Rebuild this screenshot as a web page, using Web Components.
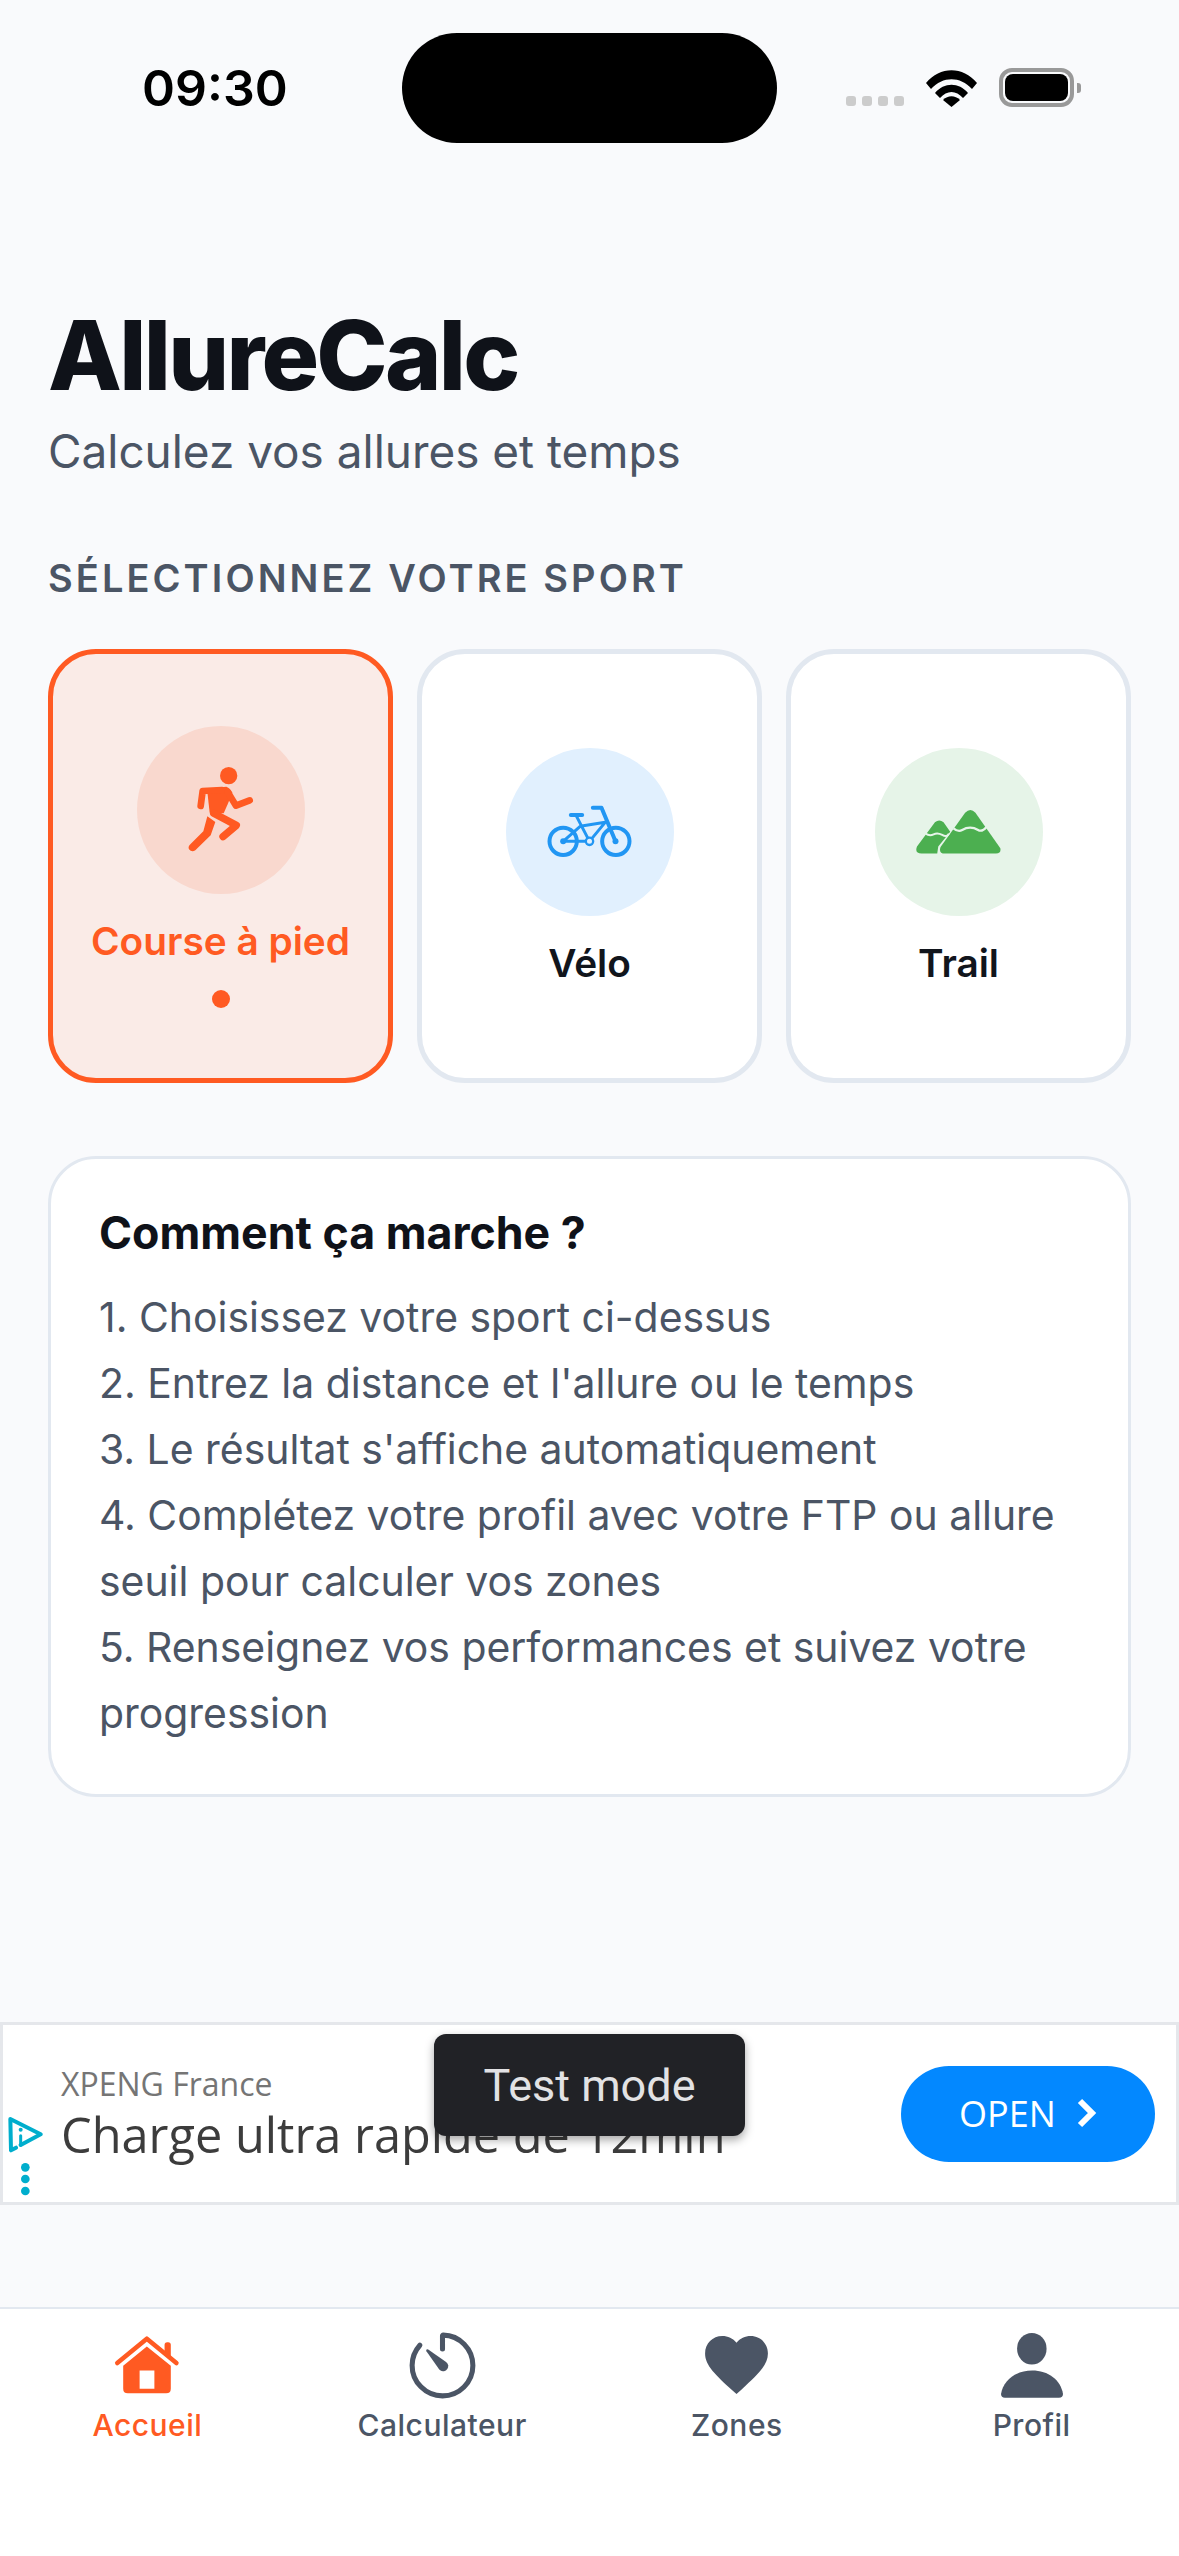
<!DOCTYPE html>
<html lang="fr">
<head>
<meta charset="utf-8">
<title>AllureCalc</title>
<style>
  html, body { margin: 0; padding: 0; }
  body { width: 1179px; height: 2556px; overflow: hidden; background: #f9fafc; font-family: Inter, "Liberation Sans", sans-serif; }
  svg { display: block; }
</style>
</head>
<body>
<app-root>
  <status-bar slot="status" time="09:30"></status-bar>
  <app-header slot="header" heading="AllureCalc" sub="Calculez vos allures et temps" label="Sélectionnez votre sport"></app-header>
  <sport-grid slot="sports">
    <sport-card label="Course à pied" active style="--accent:#ff5a22;--soft:#f9d8ce;--label:#ff5a22">
      <svg width="68" height="88" viewBox="470 410 204 264">
        <circle cx="595" cy="439" r="26" fill="#ff5a22"/>
        <path d="M530 478 L588 472 Q600 476 606 490 L592 525 L580 552 L538 550 Z" fill="#ff5a22"/>
        <g fill="none" stroke="#ff5a22" stroke-linecap="round" stroke-linejoin="round">
          <path d="M511 530 L517 485 L575 482" stroke-width="20"/>
          <path d="M592 488 L617 529 L658 513" stroke-width="20"/>
          <path d="M550 552 L618 588 L578 622" stroke-width="22"/>
        </g>
        <path d="M531 561 L555 578 L541 618 L495 663 Q484 670 476 660 Q472 652 480 645 L519 606 Z" fill="#ff5a22"/>
      </svg>
    </sport-card>
    <sport-card label="Vélo" style="--accent:#e2e8f0;--soft:#e1f0fe;--label:#11151c;--bg:#fff">
      <svg width="87" height="55" viewBox="20 25 260 165">
        <g fill="none" stroke="#2196f3" stroke-linecap="round" stroke-linejoin="round">
          <circle cx="71" cy="137" r="41" stroke-width="12"/>
          <circle cx="229" cy="137" r="41" stroke-width="12"/>
          <path d="M160 36 H186 L228 137" stroke-width="12"/>
          <path d="M94 58 H128" stroke-width="12"/>
          <path d="M110 60 L150 137 L197 80 L122 92 L71 137 H150" stroke-width="9"/>
          <circle cx="150" cy="137" r="11" stroke-width="7" fill="#e1f0fe"/>
        </g>
        <circle cx="71" cy="137" r="9" fill="#2196f3"/>
        <circle cx="228" cy="137" r="9" fill="#2196f3"/>
      </svg>
    </sport-card>
    <sport-card label="Trail" style="--accent:#e2e8f0;--soft:#e6f4e8;--label:#11151c;--bg:#fff">
      <svg width="87" height="46" viewBox="30 42 262 138">
        <path d="M181 53 Q197 37 212 53 L287 160 Q290 176 274 176 H120 Q100 176 107 156 Z" fill="#4caf50"/>
        <path d="M90 82 Q103 70 116 82 L136 110 L100 155 L97 176 H50 Q28 176 36 155 Z" fill="#4caf50"/>
        <path d="M146 100 Q160 112 172 105 T196 98 T220 105 T246 95" fill="none" stroke="#e6f4e8" stroke-width="7"/>
        <path d="M62 116 Q74 124 86 118 T112 120 T132 116" fill="none" stroke="#e6f4e8" stroke-width="6"/>
      </svg>
    </sport-card>
  </sport-grid>
  <info-card slot="info" heading="Comment ça marche ?">
    <p>1. Choisissez votre sport ci-dessus</p>
    <p>2. Entrez la distance et l'allure ou le temps</p>
    <p>3. Le résultat s'affiche automatiquement</p>
    <p>4. Complétez votre profil avec votre FTP ou allure seuil pour calculer vos zones</p>
    <p>5. Renseignez vos performances et suivez votre progression</p>
  </info-card>
  <ad-banner slot="ad" brand="XPENG France" headline="Charge ultra rapide de 12min" cta="OPEN" toast="Test mode"></ad-banner>
  <tab-bar slot="tabs">
    <tab-item label="Accueil" active>
      <svg width="66" height="60" viewBox="162 136 201 180">
        <path d="M172 220 L262 146 L352 220" fill="none" stroke="#ff5a22" stroke-width="14" stroke-linecap="round" stroke-linejoin="round"/>
        <path d="M316 165 Q316 157 324 157 H327 Q335 157 335 165 V200 L316 185 Z" fill="#ff5a22"/>
        <path fill-rule="evenodd" d="M190 228 L262 170 L335 228 V298 Q335 312 321 312 H204 Q190 312 190 298 Z M240 243 V298 H285 V243 Z" fill="#ff5a22"/>
      </svg>
    </tab-item>
    <tab-item label="Calculateur">
      <svg width="81" height="81" viewBox="0 0 512 512">
        <path d="M112.91 128A191.85 191.85 0 0064 254c-1.18 106.35 85.65 193.8 192 194 106.2.2 192-85.83 192-192 0-104.54-83.55-189.61-187.5-192a4.36 4.36 0 00-4.5 4.37V152" fill="none" stroke="#4b5565" stroke-linecap="round" stroke-linejoin="round" stroke-width="32"/>
        <path d="M233.38 278.63l-79-113a8.13 8.13 0 0111.32-11.32l113 79a32.5 32.5 0 01-37.25 53.26 33.21 33.21 0 01-8.07-7.94z" fill="#4b5565"/>
      </svg>
    </tab-item>
    <tab-item label="Zones">
      <svg width="63" height="58" viewBox="48 64 416 384">
        <path d="M256 448l-30.164-27.211C118.718 322.442 48 258.61 48 179.095 48 114.221 97.918 64 162.4 64c36.399 0 70.717 16.742 93.6 43.947C278.882 80.742 313.199 64 349.6 64 414.082 64 464 114.221 464 179.095c0 79.516-70.719 143.348-177.836 241.694L256 448z" fill="#4b5565"/>
      </svg>
    </tab-item>
    <tab-item label="Profil">
      <svg width="62" height="65" viewBox="1085 128 185 194">
        <ellipse cx="1177" cy="175" rx="44" ry="47" fill="#4b5565"/>
        <path d="M1085 310 C1092 268 1130 240 1178 240 C1226 240 1263 268 1270 310 Q1270 321 1258 321 H1097 Q1085 321 1085 310 Z" fill="#4b5565"/>
      </svg>
    </tab-item>
  </tab-bar>
</app-root>
<script>
function def(name, css, html) {
  customElements.define(name, class extends HTMLElement {
    connectedCallback() {
      if (this.shadowRoot) return;
      const root = this.attachShadow({ mode: 'open' });
      const a = (k) => (this.getAttribute(k) || '');
      root.innerHTML = '<style>' + css + '</style>' + (typeof html === 'function' ? html(a, this) : html);
    }
  });
}

def('app-root', `
  :host { display: flex; flex-direction: column; width: 1179px; height: 2556px; }
  .main { display: flex; flex-direction: column; padding: 0 48px; }
  .ad { display: block; margin-top: 225px; }
  .tabs { display: block; margin-top: 102px; }
`, `
  <slot name="status"></slot>
  <div class="main">
    <slot name="header"></slot>
    <slot name="sports"></slot>
    <slot name="info"></slot>
  </div>
  <div class="ad"><slot name="ad"></slot></div>
  <div class="tabs"><slot name="tabs"></slot></div>
`);

def('status-bar', `
  :host { display: flex; align-items: flex-start; height: 153px; box-sizing: border-box; padding-top: 33px; }
  .time { width: 402px; padding-left: 142px; box-sizing: border-box; font: 600 50px/62px Inter, sans-serif; color: #000; margin-top: 24px; }
  .island { width: 375px; height: 110px; border-radius: 55px; background: #000; flex: none; }
  .right { display: flex; align-items: flex-end; margin-left: 69px; margin-top: 35px; }
  .dots { display: flex; gap: 6px; margin-bottom: 1px; }
  .dots i { width: 10px; height: 10px; border-radius: 3px; background: #ccc; }
  .wifi { margin-left: 22px; }
  .batt { margin-left: 22px; width: 75px; height: 39px; box-sizing: border-box; border: 4px solid #999; border-radius: 13px; padding: 2px; }
  .batt b { display: block; height: 100%; background: #000; border-radius: 8px; }
  .nub { width: 4px; height: 10px; background: #999; border-radius: 0 3px 3px 0; margin: 0 0 14px 3px; }
`, (a) => `
  <div class="time">${a('time')}</div>
  <div class="island"></div>
  <div class="right">
    <div class="dots"><i></i><i></i><i></i><i></i></div>
    <svg class="wifi" width="51" height="37" viewBox="0 0 51 37"><g fill="#000">
      <path d="M0 13 C14 -4 37 -4 51 13 L46 19 C34 6 17 6 5 19 Z"/>
      <path d="M9 23 C18 12 33 12 42 23 L37 28 C30 20 21 20 14 28 Z"/>
      <path d="M17 30 C22 25 29 25 34 30 L25.5 37 Z"/>
    </g></svg>
    <div class="batt"><b></b></div>
    <div class="nub"></div>
  </div>
`);

def('app-header', `
  :host { display: block; }
  h1 { margin: 144px 0 0; font: 800 96px/116px Inter, sans-serif; letter-spacing: -2.7px; color: #0f1219; }
  p { margin: 9px 0 0; font: 400 45.9px/60px Inter, sans-serif; color: #4b5565; }
  h2 { margin: 72px 0 47px; font: 600 38px/48px Inter, sans-serif; letter-spacing: 3.08px; color: #4b5565; text-transform: uppercase; }
`, (a) => `<h1>${a('heading')}</h1><p>${a('sub')}</p><h2>${a('label')}</h2>`);

def('sport-grid', `
  :host { display: grid; grid-template-columns: repeat(3, 345px); column-gap: 24px; }
`, `<slot></slot>`);

def('sport-card', `
  :host { display: flex; flex-direction: column; align-items: center; justify-content: center; box-sizing: border-box; height: 434px; padding-top: 2px; border: 5px solid var(--accent); border-radius: 48px; background: var(--bg, #faebe7); }
  .circle { width: 168px; height: 168px; border-radius: 50%; background: var(--soft); display: flex; align-items: center; justify-content: center; }
  .label { margin-top: 23px; font: 600 38.8px/48px Inter, sans-serif; color: var(--label); white-space: nowrap; }
  .dot { width: 18px; height: 18px; border-radius: 50%; background: var(--accent); margin-top: 25px; }
`, (a, el) => `
  <div class="circle"><slot></slot></div>
  <div class="label">${a('label')}</div>
  ${el.hasAttribute('active') ? '<div class="dot"></div>' : ''}
`);

def('info-card', `
  :host { display: block; box-sizing: border-box; margin-top: 73px; height: 641px; padding: 44px 48px 0; background: #fff; border: 3px solid #e2e8f0; border-radius: 48px; }
  h3 { margin: 0 0 21px; font: 700 44.7px/60px Inter, sans-serif; color: #0f1219; }
  .list { font: 400 40.9px/66px Inter, sans-serif; color: #4b5565; }
  ::slotted(p) { margin: 0; }
`, (a) => `<h3>${a('heading')}</h3><div class="list"><slot></slot></div>`);

def('ad-banner', `
  :host { display: flex; position: relative; box-sizing: border-box; height: 183px; background: #fff; border: 3px solid #e5e7eb; font-family: "Open Sans", sans-serif; }
  .choice { position: absolute; left: 0; top: 87px; }
  .text { margin-left: 58px; padding-top: 39px; white-space: nowrap; }
  .brand { font-size: 32px; line-height: 40px; color: #757575; }
  .head { font-size: 48.7px; line-height: 62px; color: #3c3c3c; margin-top: -1px; }
  .btn { position: absolute; right: 21px; top: 41px; display: flex; align-items: center; gap: 21px; box-sizing: border-box; height: 96px; width: 254px; padding-left: 58px; padding-bottom: 2px; border-radius: 48px; background: #0388ff; color: #fff; font-size: 36px; }
  .toast { position: absolute; left: 431px; top: 9px; width: 311px; height: 102px; box-sizing: border-box; display: flex; align-items: center; justify-content: center; background: #212226; border-radius: 12px; color: #e2e2e4; font: 400 45px/1 Roboto, sans-serif; box-shadow: 0 4px 10px rgba(0,0,0,.35); }
`, (a) => `
  <svg class="choice" width="40" height="92" viewBox="9 21 120 276">
    <g fill="none" stroke="#00aecd" stroke-linecap="round" stroke-linejoin="round">
      <path d="M48 128 L33 136 L31 42 L122 88 L62 120" stroke-width="12"/>
      <path d="M62 92 V120" stroke-width="9"/>
    </g>
    <circle cx="62" cy="74" r="6" fill="#00aecd"/>
    <circle cx="76" cy="187" r="13" fill="#00aecd"/>
    <circle cx="76" cy="222" r="13" fill="#00aecd"/>
    <circle cx="76" cy="258" r="13" fill="#00aecd"/>
  </svg>
  <div class="text">
    <div class="brand">${a('brand')}</div>
    <div class="head">${a('headline')}</div>
  </div>
  <div class="btn"><span>${a('cta')}</span>
    <svg width="20" height="30" viewBox="0 0 20 30"><path d="M3 3 L15 15 L3 27" fill="none" stroke="#fff" stroke-width="6"/></svg>
  </div>
  <div class="toast">${a('toast')}</div>
`);

def('tab-bar', `
  :host { display: grid; grid-template-columns: repeat(4, 1fr); height: 249px; box-sizing: border-box; background: #fff; border-top: 2px solid #e2e8f0; padding-top: 23px; }
`, `<slot></slot>`);

def('tab-item', `
  :host { display: flex; flex-direction: column; align-items: center; }
  .icon { height: 66px; display: flex; align-items: center; justify-content: center; }
  .label { margin-top: 7px; font: 500 30px/40px Inter, sans-serif; letter-spacing: .5px; color: #4b5565; }
  :host([active]) .label { color: #ff5a22; }
`, (a) => `<div class="icon"><slot></slot></div><div class="label">${a('label')}</div>`);
</script>
</body>
</html>
